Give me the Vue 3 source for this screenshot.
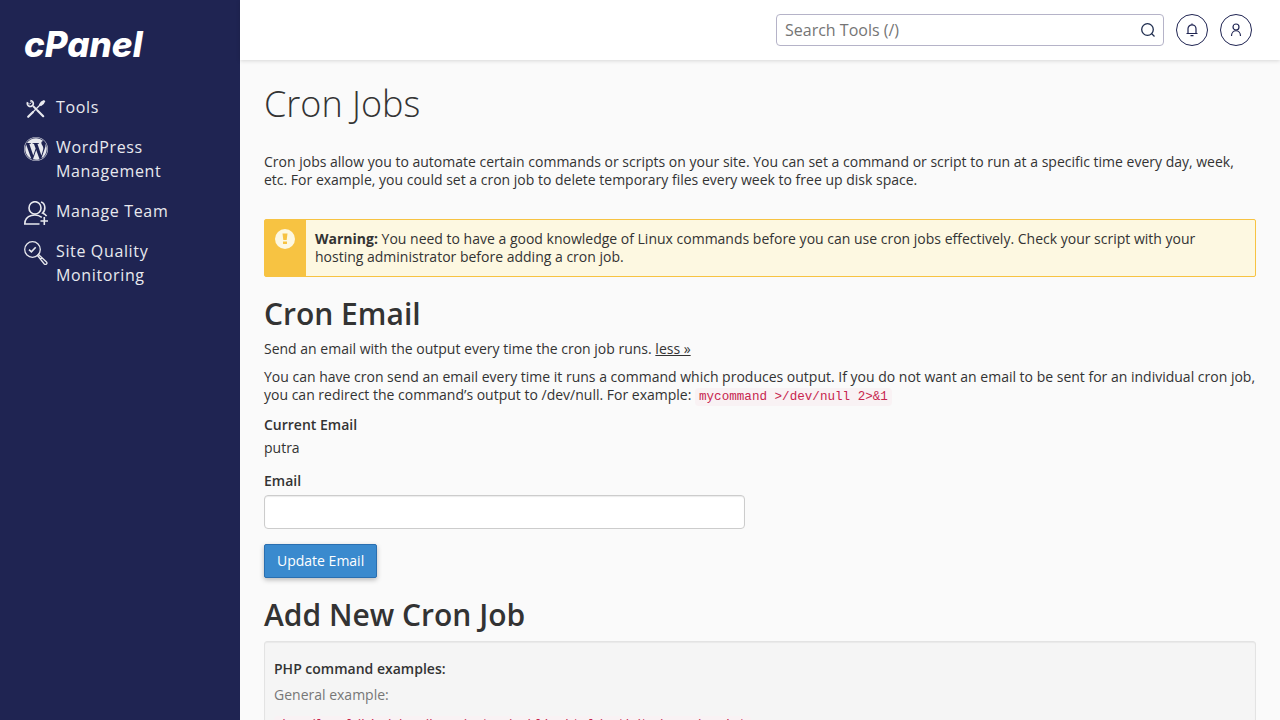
<script setup>
import { ref } from 'vue'

const search = ref('')
const email = ref('')
</script>

<template>
  <div class="shell">
    <aside class="sidebar">
      <a class="brand" href="#" aria-label="cPanel home">cPanel</a>
      <nav class="nav">
        <a class="nav-item" href="#tools">
          <svg viewBox="0 0 24 24" fill="none" stroke="currentColor">
            <path d="m9 9 4 4" stroke-width="1.800" />
            <path d="m13.500 13.500 5.700 5.700" stroke-width="2.200" stroke-linecap="round" />
            <path d="M3.600 5.200a3 3 0 1 0 2.900-1.700" stroke-width="1.700" />
            <path d="m4.200 6.200 1.700.9 1.400-1.400-.8-1.900" stroke-width=".8" />
            <path d="m4.200 19.800 4.600-4.600" stroke-width="2.200" stroke-linecap="round" />
            <path d="m8.500 15.500 8-8" stroke-width="1.300" />
            <path d="m14.900 7.400 2.100-2.900 3-1.600 1.300 1.300-1.500 2.900-2.900 2.100z" fill="currentColor" stroke="none" />
          </svg>
          <span>Tools</span>
        </a>
        <a class="nav-item" href="#wordpress">
          <svg viewBox="0 0 24 24" fill="currentColor">
            <path d="M21.469 6.825c.84 1.537 1.318 3.3 1.318 5.175 0 3.979-2.156 7.456-5.363 9.325l3.295-9.527c.615-1.54.82-2.771.82-3.864 0-.405-.026-.78-.07-1.11m-7.981.105c.647-.03 1.232-.105 1.232-.105.582-.075.514-.93-.067-.899 0 0-1.755.135-2.88.135-1.064 0-2.85-.15-2.85-.15-.585-.03-.661.855-.075.885 0 0 .54.061 1.125.09l1.68 4.605-2.37 7.08L5.354 6.9c.649-.03 1.234-.1 1.234-.1.585-.075.516-.93-.065-.896 0 0-1.746.138-2.874.138-.2 0-.438-.008-.69-.015C4.911 3.15 8.235 1.215 12 1.215c2.809 0 5.365 1.072 7.286 2.833-.046-.003-.091-.009-.141-.009-1.06 0-1.812.923-1.812 1.914 0 .89.513 1.643 1.06 2.531.411.72.89 1.643.89 2.977 0 .915-.354 1.994-.821 3.479l-1.075 3.585zm-1.48 15.855c-1.059 0-2.081-.153-3.048-.437l3.237-9.406 3.315 9.087c.024.053.05.101.078.149-1.12.393-2.325.607-3.582.607M1.211 12c0-1.564.336-3.05.935-4.39L7.29 21.709C3.694 19.96 1.212 16.271 1.211 12M12 0C5.385 0 0 5.385 0 12s5.385 12 12 12 12-5.385 12-12S18.615 0 12 0m0 .55c6.310 0 11.450 5.140 11.450 11.450S18.310 23.450 12 23.450.550 18.310.550 12 5.690.550 12 .550" />
          </svg>
          <span>WordPress Management</span>
        </a>
        <a class="nav-item" href="#team">
          <svg viewBox="0 0 24 24" fill="none" stroke="currentColor" stroke-width="1.600">
            <ellipse cx="11" cy="6.900" rx="6" ry="6.200" />
            <path d="M17 .9c4.800 1.500 4.800 8.500 1.600 11.200 1.800.7 3.100 1.700 4 3" />
            <path d="M15.500 23H.8c0-10 12-10.500 17-6.600M20.300 16v8M16.500 20H24" />
          </svg>
          <span>Manage Team</span>
        </a>
        <a class="nav-item" href="#quality">
          <svg viewBox="0 0 24 24" fill="none" stroke="currentColor" stroke-width="1.300">
            <circle cx="8.500" cy="8.500" r="7.800" />
            <path d="m5 8.600 2.400 2.200 4.300-4.600" stroke-width="1.600" />
            <path d="m13.500 14.500 1-1 8 7.500c1.500 1.500-.8 3.400-2.200 2l-6.800-8.500M16.500 18.200l2-1.800" />
          </svg>
          <span>Site Quality Monitoring</span>
        </a>
      </nav>
    </aside>

    <div class="page">
      <header class="topbar">
        <form class="search" role="search" @submit.prevent>
          <input v-model="search" type="text" aria-label="Search Tools" placeholder="Search Tools (/)" />
          <button type="submit" aria-label="Search">
            <svg viewBox="0 0 16 16" fill="none" stroke="currentColor" stroke-width="1.300">
              <circle cx="7.500" cy="7.500" r="5.800" />
              <path d="m11.500 11.500 3 3" />
            </svg>
          </button>
        </form>
        <button class="round" type="button" aria-label="Notifications">
          <svg viewBox="0 0 16 16" fill="none" stroke="currentColor" stroke-width="1.200">
            <path d="M2.500 11.500h11M4 11.500V6.800a4 4 0 0 1 8 0v4.700M8 2.800V1.600M6.500 13.700h3" />
          </svg>
        </button>
        <button class="round" type="button" aria-label="Account">
          <svg viewBox="0 0 16 16" fill="none" stroke="currentColor" stroke-width="1.200">
            <circle cx="8" cy="5" r="3" />
            <path d="M3.500 14c0-7 9-7 9 0" />
          </svg>
        </button>
      </header>

      <main class="content">
        <h1>Cron Jobs</h1>
        <p class="intro">
          Cron jobs allow you to automate certain commands or scripts on your site. You can set a command or script to
          run at a specific time every day, week, etc. For example, you could set a cron job to delete temporary files
          every week to free up disk space.
        </p>

        <div class="alert" role="alert">
          <div class="alert-icon">
            <svg viewBox="0 0 20 20">
              <circle cx="10" cy="10" r="10" fill="#fdf8e1" />
              <path d="M7.500 4.500h5l-.8 6.500H8.300zM8 12.500h4V15H8z" fill="#f7c342" />
            </svg>
          </div>
          <div class="alert-text">
            <strong>Warning:</strong> You need to have a good knowledge of Linux commands before you can use cron jobs
            effectively. Check your script with your hosting administrator before adding a cron job.
          </div>
        </div>

        <section>
          <h2>Cron Email</h2>
          <p>Send an email with the output every time the cron job runs. <a href="#less">less »</a></p>
          <p>
            You can have cron send an email every time it runs a command which produces output. If you do not want an
            email to be sent for an individual cron job, you can redirect the command’s output to /dev/null. For
            example: <code>mycommand &gt;/dev/null 2&gt;&amp;1</code>
          </p>
          <form @submit.prevent>
            <div class="field">
              <strong class="label">Current Email</strong>
              <span>putra</span>
            </div>
            <div class="field">
              <label class="label" for="email">Email</label>
              <input id="email" v-model="email" type="text" />
            </div>
            <button class="primary" type="submit">Update Email</button>
          </form>
        </section>

        <section>
          <h2>Add New Cron Job</h2>
          <div class="well">
            <h3>PHP command examples:</h3>
            <p class="muted">General example:</p>
            <code>/usr/local/bin/php /home/putra/public_html/path/to/cron/script</code>
          </div>
        </section>
      </main>
    </div>
  </div>
</template>

<style>
html,
body {
  height: 100%;
  overflow: hidden;
}

#app {
  height: 100%;
}
</style>

<style scoped>
.shell,
.shell * {
  box-sizing: border-box;
}

.shell {
  display: flex;
  height: 100%;
  background: #fafafa;
  color: #333;
  font: 14px/18px "Open Sans", "Noto Sans", sans-serif;
}

.sidebar {
  flex: 0 0 240px;
  padding: 24px;
  background: #1f2452;
}

.brand {
  display: block;
  color: #fff;
  font-family: Inter, "Open Sans", sans-serif;
  font-size: 35px;
  font-style: italic;
  font-weight: 800;
  line-height: 40px;
  text-decoration: none;
}

.nav {
  display: flex;
  flex-direction: column;
  gap: 16px;
  margin-top: 31px;
}

.nav-item {
  display: flex;
  gap: 8px;
  color: #e8e9ee;
  font-size: 16px;
  line-height: 24px;
  letter-spacing: 0.04em;
  text-decoration: none;
}

.nav-item svg {
  flex: none;
  width: 24px;
  height: 24px;
  margin: 2px 0 -2px;
}

.page {
  display: flex;
  flex: 1;
  flex-direction: column;
  min-width: 0;
}

.topbar {
  display: flex;
  flex: none;
  align-items: center;
  justify-content: flex-end;
  gap: 12px;
  height: 60px;
  padding: 0 28px;
  background: #fff;
  box-shadow: 0 1px 4px rgba(0, 0, 0, 0.14);
}

.search {
  display: flex;
  width: 388px;
  height: 32px;
  border: 1px solid #b5b3c8;
  border-radius: 4px;
}

.search input {
  flex: 1;
  min-width: 0;
  padding: 0 8px;
  border: 0;
  background: none;
  color: #333;
  font: inherit;
  font-size: 16px;
  outline: none;
}

.search input::placeholder {
  color: #757575;
}

.search button {
  display: grid;
  place-items: center;
  width: 30px;
  padding: 0;
  border: 0;
  background: none;
  color: #1f2d4f;
}

.search svg {
  width: 16px;
  height: 16px;
}

.round {
  display: grid;
  place-items: center;
  width: 32px;
  height: 32px;
  padding: 0;
  border: 1px solid #1f2452;
  border-radius: 50%;
  background: #fff;
  color: #1f2452;
}

.round svg {
  width: 16px;
  height: 16px;
}

.content {
  flex: 1;
  padding: 24px;
}

h1,
h2,
h3,
p {
  margin: 0;
}

h1 {
  font-size: 36px;
  font-weight: 300;
  line-height: 40px;
}

h2 {
  margin-bottom: 10px;
  font-size: 30px;
  font-weight: 550;
  line-height: 32px;
}

h3 {
  margin-bottom: 8px;
  font-size: 14px;
  font-weight: 550;
  line-height: 18px;
}

p {
  margin-bottom: 10px;
}

p a {
  color: #333;
}

.intro {
  margin: 29px 0 30px;
}

.alert {
  display: flex;
  margin-bottom: 21px;
  border: 1px solid #f7c342;
  border-radius: 2px;
  background: #fdf8e1;
}

.alert-icon {
  flex: 0 0 41px;
  padding: 9px 10px;
  background: #f7c342;
}

.alert-icon svg {
  display: block;
  width: 20px;
  height: 20px;
}

.alert-text {
  padding: 10px 9px;
}

code {
  padding: 2px 4px;
  border-radius: 4px;
  background: #f9f2f4;
  color: #c7254e;
  font-family: "Liberation Mono", monospace;
  font-size: 90%;
}

.label {
  display: block;
  margin-bottom: 5px;
  font-weight: 600;
}

.field {
  margin-bottom: 15px;
}

.field input {
  display: block;
  width: calc(50% - 15px);
  height: 34px;
  padding: 6px 12px;
  border: 1px solid #ccc;
  border-radius: 4px;
  background: #fff;
  color: #333;
  font: inherit;
  box-shadow: inset 0 1px 1px rgba(0, 0, 0, 0.08);
}

.primary {
  height: 34px;
  margin-bottom: 21px;
  padding: 0 12px;
  border: 1px solid #2a6fb0;
  border-radius: 2px;
  background: #3a8ace;
  color: #fff;
  font: inherit;
  box-shadow: 0 2px 5px rgba(0, 0, 0, 0.26);
}

.well {
  padding: 18px 9px;
  border: 1px solid #e3e3e3;
  border-radius: 3px;
  background: #f5f5f5;
  box-shadow: inset 0 1px 1px rgba(0, 0, 0, 0.05);
}

.muted {
  margin-bottom: 10px;
  color: #777;
}
</style>
